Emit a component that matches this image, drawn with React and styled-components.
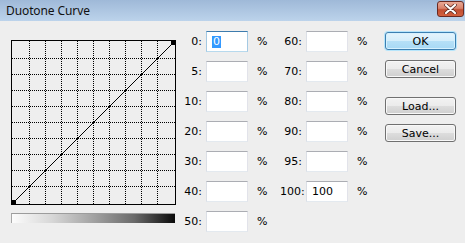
import React from "react";
import styled, { createGlobalStyle } from "styled-components";

const GlobalStyle = createGlobalStyle`
  html, body {
    margin: 0;
    padding: 0;
    background: #eeeeee;
  }
  body {
    font-family: "DejaVu Sans", "Liberation Sans", sans-serif;
    font-size: 11px;
    color: #000;
  }
`;

const Window = styled.div`
  width: 465px;
  height: 243px;
  display: flex;
  flex-direction: column;
  background: #eeeeee;
  overflow: hidden;
`;

const TitleBar = styled.div`
  height: 21px;
  display: flex;
  align-items: center;
  justify-content: space-between;
  padding-left: 6px;
  padding-right: 1px;
  background: linear-gradient(#9fb9d8, #bcd3eb);
`;

const Title = styled.span`
  font-family: "Noto Sans", "Open Sans", sans-serif;
  font-size: 12px;
  color: #111;
  letter-spacing: -0.1px;
`;

const CloseButton = styled.div`
  width: 27px;
  height: 16px;
  margin-top: -3px;
  border: 1px solid #6a2a22;
  border-radius: 3px;
  box-sizing: border-box;
  display: flex;
  align-items: center;
  justify-content: center;
  background: linear-gradient(#e9a996 0%, #d9826b 45%, #c24f33 55%, #d2613f 100%);
`;

const Body = styled.div`
  flex: 1;
  display: flex;
  align-items: flex-start;
`;

const CurvePanel = styled.div`
  display: flex;
  flex-direction: column;
  margin-left: 11px;
  margin-top: 19px;
  width: 165px;
`;

const GradientBar = styled.div`
  margin-top: 8px;
  width: 164px;
  height: 10px;
  box-sizing: border-box;
  border-top: 1px solid #9c9c9c;
  border-left: 1px solid #a8a8a8;
  background: linear-gradient(to right, #fcfcfc, #d6d6d6 25%, #a2a2a2 50%, #6a6a6a 75%, #0a0a0a);
`;

const Fields = styled.div`
  margin-left: 4px;
  margin-top: 10px;
  display: grid;
  grid-template-columns: 26px 42px 32px 26px 42px 22px;
  grid-auto-rows: 21px;
  row-gap: 9px;
  align-items: center;
`;

const Label = styled.span`
  text-align: right;
  padding-right: 4px;
  white-space: nowrap;
`;

const Percent = styled.span`
  padding-left: 9px;
`;

const Input = styled.div`
  height: 21px;
  box-sizing: border-box;
  background: #fff;
  border: 1px solid;
  border-color: ${({ focused }) =>
    focused ? "#3d7bad #a4c9e3 #b7d9ed #a4c9e3" : "#abadb3 #e2e3ea #e3e9ef #dbdfe6"};
  display: flex;
  align-items: center;
  padding-left: 5px;
`;

const Selected = styled.span`
  background: #3399ff;
  color: #fff;
  padding: 0 1px;
  line-height: 12px;
`;

const Buttons = styled.div`
  margin-left: 15px;
  margin-top: 11px;
  display: flex;
  flex-direction: column;
`;

const Button = styled.div`
  width: 71px;
  height: 18px;
  margin-top: ${({ gap }) => gap || 0}px;
  box-sizing: border-box;
  border: 1px solid ${({ primary }) => (primary ? "#3c7fb1" : "#707070")};
  border-radius: 3px;
  display: flex;
  align-items: center;
  justify-content: center;
  background: ${({ primary }) =>
    primary
      ? "linear-gradient(#e5f4fc 0%, #d4eefb 50%, #b6e0f7 51%, #a7d9f5 100%)"
      : "linear-gradient(#f2f2f2 0%, #ebebeb 50%, #dddddd 51%, #cfcfcf 100%)"};
  box-shadow: ${({ primary }) =>
    primary ? "0 0 0 1px #b6e5fb, inset 0 0 0 1px #d6f1fe" : "inset 0 0 0 1px #f8f8f8"};
`;

const grid = [18, 34, 50, 66, 82, 98, 114, 130, 146];

const Curve = () => (
  <svg width="165" height="165" viewBox="0 0 165 165" shapeRendering="crispEdges">
    {grid.map((v) => (
      <g key={v}>
        <line x1={v + 0.5} y1="1" x2={v + 0.5} y2="164" stroke="#000" strokeDasharray="1 1" />
        <line x1="1" y1={v + 0.5} x2="164" y2={v + 0.5} stroke="#000" strokeDasharray="1 1" />
      </g>
    ))}
    <rect x="0.5" y="0.5" width="164" height="164" fill="none" stroke="#000" />
    <line x1="1" y1="164" x2="164" y2="1" stroke="#000" shapeRendering="auto" />
    {grid.map((v) => (
      <rect key={v} x={v} y={164 - v - 1} width="2" height="2" fill="#000" />
    ))}
    <rect x="0" y="160" width="5" height="5" fill="#000" />
    <rect x="160" y="0" width="5" height="5" fill="#000" />
  </svg>
);

const rows = [
  ["0", "60"],
  ["5", "70"],
  ["10", "80"],
  ["20", "90"],
  ["30", "95"],
  ["40", "100"],
  ["50", null],
];

export default function App() {
  return (
    <>
      <GlobalStyle />
      <Window>
        <TitleBar>
          <Title>Duotone Curve</Title>
          <CloseButton>
            <svg width="13" height="10" viewBox="0 0 13 10">
              <path
                d="M2 1 L11 9 M11 1 L2 9"
                stroke="#5a2a22"
                strokeWidth="3.6"
                strokeLinecap="round"
              />
              <path d="M2 1 L11 9 M11 1 L2 9" stroke="#fff" strokeWidth="2.2" strokeLinecap="round" />
            </svg>
          </CloseButton>
        </TitleBar>
        <Body>
          <CurvePanel>
            <Curve />
            <GradientBar />
          </CurvePanel>
          <Fields>
            {rows.map(([a, b]) => (
              <React.Fragment key={a}>
                <Label>{a}:</Label>
                <Input focused={a === "0"}>{a === "0" && <Selected>0</Selected>}</Input>
                <Percent>%</Percent>
                {b ? (
                  <>
                    <Label>{b}:</Label>
                    <Input>{b === "100" && "100"}</Input>
                    <Percent>%</Percent>
                  </>
                ) : (
                  <>
                    <span />
                    <span />
                    <span />
                  </>
                )}
              </React.Fragment>
            ))}
          </Fields>
          <Buttons>
            <Button primary>OK</Button>
            <Button gap={10}>Cancel</Button>
            <Button gap={19}>Load...</Button>
            <Button gap={9}>Save...</Button>
          </Buttons>
        </Body>
      </Window>
    </>
  );
}
